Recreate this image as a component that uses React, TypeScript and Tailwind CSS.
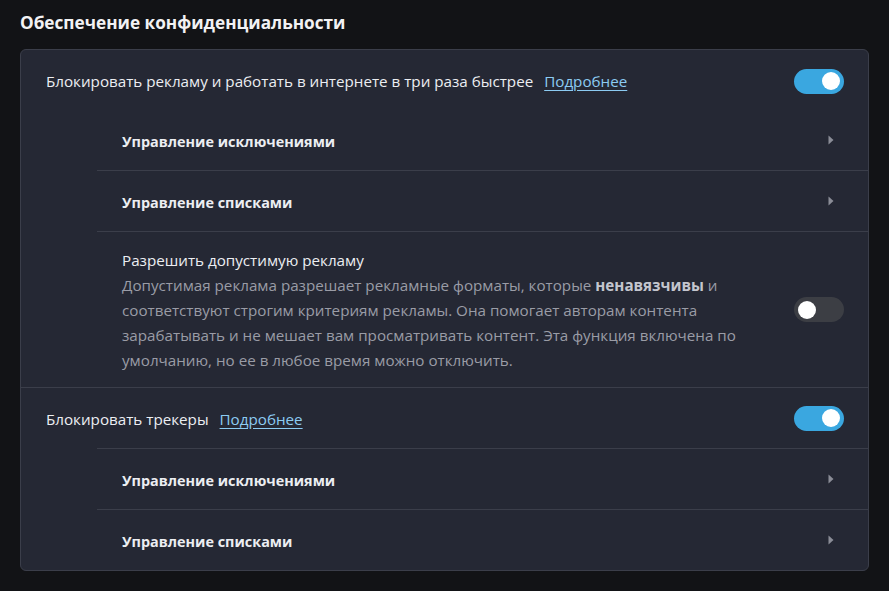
import React from "react";

const font = { fontFamily: '"Open Sans", "Noto Sans", sans-serif' };

function Toggle({ on }: { on: boolean }) {
  return (
    <div
      className={`flex h-[25px] w-[50px] shrink-0 items-center rounded-full px-[4px] ${
        on ? "justify-end bg-[#3aa7e0]" : "justify-start bg-[#3c3e44]"
      }`}
    >
      <div className="h-[18px] w-[18px] rounded-full bg-white" />
    </div>
  );
}

function Chevron() {
  return (
    <svg width="6" height="10" viewBox="0 0 6 10" className="shrink-0">
      <path d="M0.5 0.5 L5.5 5 L0.5 9.5 Z" fill="#8b8d97" />
    </svg>
  );
}

function SubRow({ label, divider }: { label: string; divider: boolean }) {
  return (
    <div
      className={`ml-[76px] flex items-center justify-between pl-[25px] pr-[34px] ${
        divider ? "h-[61px] border-t border-[#3b3e4a]" : "h-[60px]"
      }`}
    >
      <span className="pt-[3px] text-[14.4px] font-bold text-[#eceef2]">{label}</span>
      <Chevron />
    </div>
  );
}

function Link() {
  return (
    <span className="ml-[11px] text-[15.2px] text-[#8ccbf2] underline underline-offset-[3px]">Подробнее</span>
  );
}

export default function App() {
  return (
    <div className="min-h-[591px] w-full bg-[#121316] px-[20px] pt-[10px]" style={font}>
      <h1 className="h-[39px] text-[17.2px] font-bold leading-[26px] text-[#f2f2f4]">Обеспечение конфиденциальности</h1>
      <div className="overflow-hidden rounded-[6px] border border-[#3b3e4a] bg-[#252834]">
        <div className="flex h-[60px] items-center justify-between pl-[25px] pr-[24px] pt-[2px]">
          <div className="flex items-center">
            <span className="text-[15.2px] text-[#eceef2]">Блокировать рекламу и работать в интернете в три раза быстрее</span>
            <Link />
          </div>
          <Toggle on={true} />
        </div>
        <SubRow label="Управление исключениями" divider={false} />
        <SubRow label="Управление списками" divider={true} />
        <div className="ml-[76px] flex h-[156px] items-center justify-between border-t border-[#3b3e4a] pl-[25px] pr-[24px]">
          <div className="w-[650px] pt-[2px]">
            <div className="text-[15.2px] leading-[25px] text-[#eceef2]">Разрешить допустимую рекламу</div>
            <div className="text-[15.2px] leading-[25px] text-[#9a9ca6]">
              Допустимая реклама разрешает рекламные форматы, которые{" "}
              <b className="font-bold text-[#c4c6ce]">ненавязчивы</b> и
              <br />
              соответствуют строгим критериям рекламы. Она помогает авторам контента
              <br />
              зарабатывать и не мешает вам просматривать контент. Эта функция включена по
              <br />
              умолчанию, но ее в любое время можно отключить.
            </div>
          </div>
          <Toggle on={false} />
        </div>
        <div className="flex h-[61px] items-center justify-between border-t border-[#3b3e4a] pl-[25px] pr-[24px]">
          <div className="flex items-center pt-[2px]">
            <span className="text-[15.2px] text-[#eceef2]">Блокировать трекеры</span>
            <Link />
          </div>
          <Toggle on={true} />
        </div>
        <SubRow label="Управление исключениями" divider={true} />
        <SubRow label="Управление списками" divider={true} />
      </div>
    </div>
  );
}
